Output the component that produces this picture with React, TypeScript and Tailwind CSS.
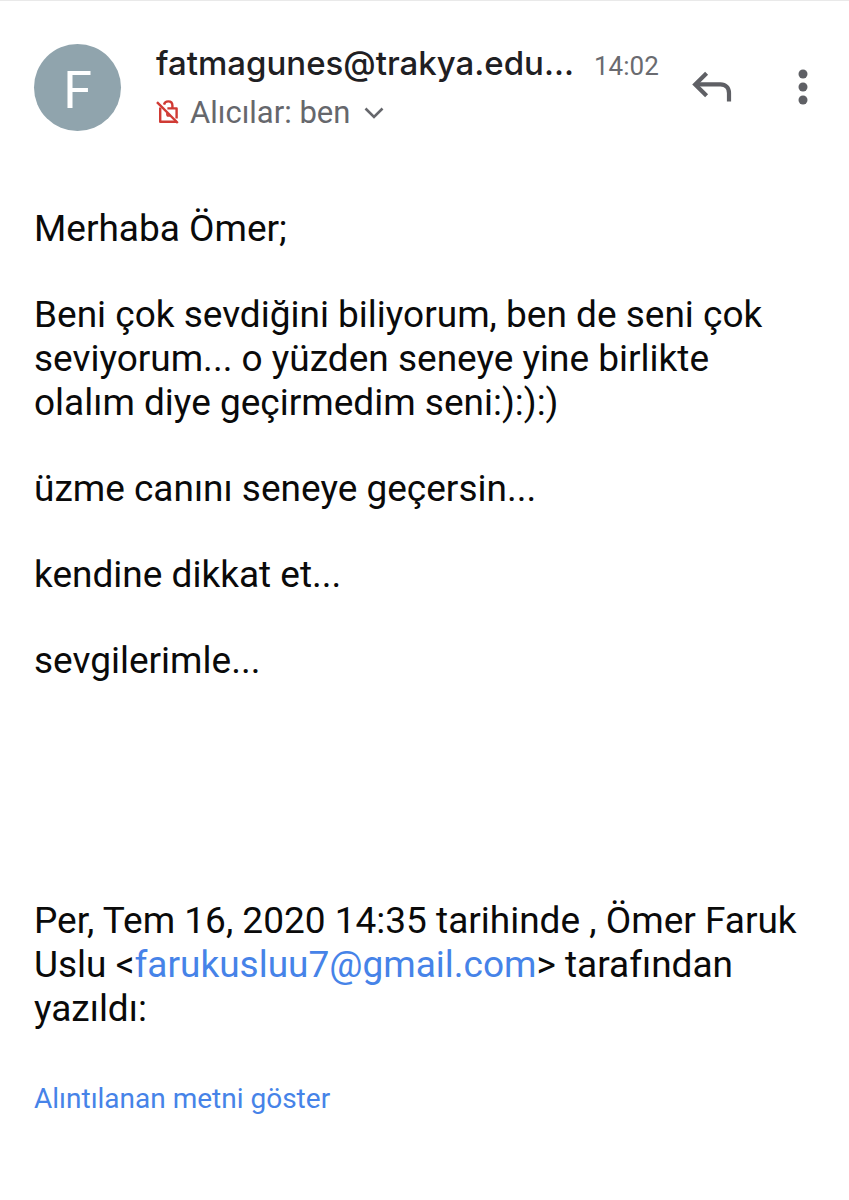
import React from 'react';

const paragraphs = [
  'Merhaba Ömer;',
  'Beni çok sevdiğini biliyorum, ben de seni çok seviyorum... o yüzden seneye yine birlikte olalım diye geçirmedim seni:):):)',
  'üzme canını seneye geçersin...',
  'kendine dikkat et...',
  'sevgilerimle...',
];

const NoEncryptionIcon: React.FC = () => (
  <svg viewBox="0 0 24 24" className="w-6 h-6 mb-[3px] shrink-0" fill="none" stroke="#d03a34" strokeWidth="2.4" aria-hidden="true">
    <path d="M1 2.2 L21.8 23" />
    <path d="M4.2 7.4 V21.8 H20.6" strokeLinejoin="round" />
    <path d="M11.4 8.4 H20.6 V18.6" strokeLinejoin="round" />
    <path d="M8 4.6 C8.6 2.4 10.2 1.4 12.2 1.4 C14.8 1.4 16.4 3.2 16.4 5.6 V8.4" />
    <path d="M10 12.6 L14.4 16.8 H11.4 C10.4 16.4 9.8 14.4 10 12.6 Z" fill="#d03a34" stroke="none" />
  </svg>
);

const ReplyIcon: React.FC = () => (
  <svg viewBox="0 0 40 32" className="w-10 h-8" fill="none" stroke="#5f6065" strokeWidth="4.2" aria-hidden="true">
    <path d="M14.6 2.2 L3.2 13.4 L14.6 24.8" />
    <path d="M4 13.4 H28.5 C33.6 13.4 37 16.8 37 22 V30.6" />
  </svg>
);

const MoreIcon: React.FC = () => (
  <svg viewBox="0 0 10 36" className="w-[10px] h-9" fill="#5f6065" aria-hidden="true">
    <circle cx="5" cy="5" r="4.5" />
    <circle cx="5" cy="18" r="4.5" />
    <circle cx="5" cy="31" r="4.5" />
  </svg>
);

const MessageHeader: React.FC = () => (
  <header className="flex items-center pl-[34px] pr-[41px]">
    <div className="w-[87px] h-[87px] shrink-0 rounded-full bg-[#90a4ad] text-white flex items-center justify-center pt-2 text-[52px] leading-none">
      F
    </div>
    <div className="flex-1 min-w-0 ml-[35px]">
      <div className="flex items-baseline gap-5">
        <h1 className="font-['Inter',sans-serif] font-medium text-[33px] leading-[52px] text-[#1f2023] whitespace-nowrap">
          fatmagunes@trakya.edu...
        </h1>
        <time className="text-[26px] text-[#6a6b70]">14:02</time>
      </div>
      <button type="button" className="flex items-center gap-[10px] text-[31px] leading-[48px] text-[#66676c]">
        <NoEncryptionIcon />
        <span>Alıcılar: ben</span>
        <svg viewBox="0 0 20 12" className="w-5 h-3 ml-1" fill="none" stroke="#66676c" strokeWidth="2.6" aria-hidden="true">
          <path d="M1.5 1.5 L10 10 L18.5 1.5" />
        </svg>
      </button>
    </div>
    <div className="flex items-center gap-[66px] shrink-0">
      <button type="button" aria-label="Yanıtla">
        <ReplyIcon />
      </button>
      <button type="button" aria-label="Diğer seçenekler">
        <MoreIcon />
      </button>
    </div>
  </header>
);

const App: React.FC = () => {
  return (
    <main lang="tr" className="min-h-screen bg-white border-t border-[#e9e9e9] pt-9 pb-16 font-['Roboto',sans-serif]">
      <MessageHeader />
      <article className="mt-[70px] px-[34px] text-[37px] leading-[44px] text-[#0a0a0a]">
        <div className="space-y-[42px]">
          {paragraphs.map((text) => (
            <p key={text}>{text}</p>
          ))}
        </div>
        <p className="mt-[216px]">
          Per, Tem 16, 2020 14:35 tarihinde , Ömer Faruk Uslu &lt;
          <a href="mailto:farukusluu7@gmail.com" className="text-[#4683e8]">farukusluu7@gmail.com</a>
          &gt; tarafından yazıldı:
        </p>
        <button type="button" className="mt-[46px] block text-[28px] text-[#4683e8]">
          Alıntılanan metni göster
        </button>
      </article>
    </main>
  );
};

export default App;
